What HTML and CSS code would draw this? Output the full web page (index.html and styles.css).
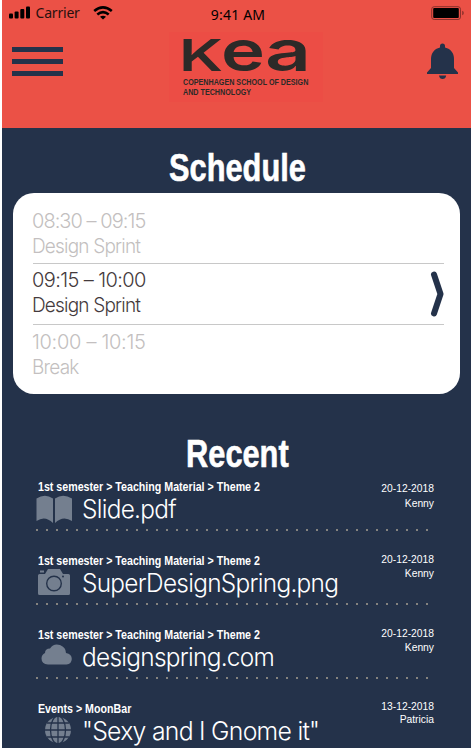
FILE: index.html
```html
<!DOCTYPE html>
<html lang="en">
<head>
<meta charset="utf-8">
<title>KEA</title>
<link rel="stylesheet" href="styles.css">
</head>
<body>
<main class="screen">
  <header class="top">
    <div class="status">
      <div class="status-left">
        <svg class="signal" width="22" height="13" viewBox="0 0 22 13"><rect x="0" y="7.500" width="4" height="5" rx="1"/><rect x="5.600" y="5.500" width="4" height="7" rx="1"/><rect x="11.300" y="3" width="4" height="9.500" rx="1"/><rect x="17" y="0.500" width="4" height="12" rx="1"/></svg>
        <span class="carrier">Carrier</span>
        <svg class="wifi" width="20" height="14" viewBox="0 0 20 14" fill="none" stroke="#000" stroke-width="2.600"><path d="M1.200 5.100Q10 -2.200 18.800 5.100"/><path d="M4.300 8.500Q10 3.900 15.700 8.500"/><path d="M7 10.700Q10 8.600 13 10.700L10 13.600Z" fill="#000" stroke="none"/></svg>
      </div>
      <span class="clock">9:41 AM</span>
      <svg class="battery" width="34" height="14" viewBox="0 0 34 14"><rect x=".7" y=".7" width="28.800" height="12.800" rx="2.500" fill="none" stroke="#8b302b"/><rect x="2.200" y="2" width="25.600" height="10" rx="1" fill="#000"/><path d="M31.200 4.800q1.600.5 1.600 2.200t-1.600 2.200z" fill="#8b302b"/></svg>
    </div>
    <div class="bar">
      <div class="menu"><i></i><i></i><i></i></div>
      <div class="brand">
        <svg class="logo" width="130" height="38" viewBox="0 0 130 38"><text class="logo-k" x="-4" y="36" textLength="44" lengthAdjust="spacingAndGlyphs">K</text><text class="logo-ea" x="38" y="35.500" textLength="44" lengthAdjust="spacingAndGlyphs">e</text><text class="logo-ea" x="82" y="35.500" textLength="46" lengthAdjust="spacingAndGlyphs">a</text></svg>
        <div class="tagline">COPENHAGEN SCHOOL OF DESIGN<br>AND TECHNOLOGY</div>
      </div>
      <svg class="bell" width="32" height="37" viewBox="0 0 32 37"><path d="M13 4.500V3a2.500 2.500 0 0 1 5 0v1.500C24 5.800 27 10.500 27 16v9l4 4.500V31H0v-1.500L4 25v-9C4 10.500 7 5.800 13 4.500ZM12 32.500h7.200q-.6 3.500-3.600 3.500T12 32.500Z" fill="#24324a"/></svg>
    </div>
  </header>

  <h1 class="heading schedule-heading"><span>Schedule</span></h1>
  <section class="card">
    <div class="slot muted"><p class="early">08:30 – 09:15</p><p class="name">Design Sprint</p></div>
    <div class="slot current"><div><p>09:15 – 10:00</p><p class="name">Design Sprint</p></div>
      <svg class="chevron" width="14" height="46" viewBox="0 0 14 46" fill="none" stroke="#24324a" stroke-width="6" stroke-linecap="round" stroke-linejoin="round"><path d="M4 3.500L10.500 23L4 42.500"/></svg></div>
    <div class="slot muted"><p class="late">10:00 – 10:15</p><p class="name">Break</p></div>
  </section>

  <h1 class="heading recent-heading"><span>Recent</span></h1>
  <section class="recent">
    <article class="item first">
      <p class="crumbs">1st semester &gt; Teaching Material &gt; Theme 2</p>
      <div class="file"><svg class="icon" width="42" height="30" viewBox="0 0 42 30"><path d="M.5 3.500Q9-2 17 3.500V28Q9 20 .5 26Z M19 3.500Q27-2 36 3.500V26Q27 20 19 28Z"/></svg><span>Slide.pdf</span></div>
      <p class="meta">20-12-2018<br>Kenny</p>
      <svg class="dots" width="396" height="4"><line x1="0" y1="2" x2="395" y2="2"/></svg>
    </article>
    <article class="item">
      <p class="crumbs">1st semester &gt; Teaching Material &gt; Theme 2</p>
      <div class="file"><svg class="icon" width="42" height="30" viewBox="0 0 42 30"><path d="M4 1.500h4v2H4zM3.500 5H9l3-5h12l3 5h5.500q1.500 0 1.500 1.500v18q0 1.500-1.500 1.500h-29Q2 26 2 24.500v-18Q2 5 3.500 5Z"/><circle cx="18" cy="14.500" r="7.300" fill="none" stroke="#24324a" stroke-width="1.400"/><circle cx="27" cy="7.500" r="1" fill="#24324a"/></svg><span>SuperDesignSpring.png</span></div>
      <p class="meta">20-12-2018<br>Kenny</p>
      <svg class="dots" width="396" height="4"><line x1="0" y1="2" x2="395" y2="2"/></svg>
    </article>
    <article class="item">
      <p class="crumbs">1st semester &gt; Teaching Material &gt; Theme 2</p>
      <div class="file"><svg class="icon" width="42" height="30" viewBox="0 0 42 30"><path d="M12 21.500Q5.500 21 5.500 15.500Q5.500 11.500 9 10Q9 5.500 14 5.500Q17.500 0 24 2Q30 4.500 30 10Q35.800 11 35.800 16Q35.500 21 30.500 21.500Z"/></svg><span>designspring.com</span></div>
      <p class="meta">20-12-2018<br>Kenny</p>
      <svg class="dots" width="396" height="4"><line x1="0" y1="2" x2="395" y2="2"/></svg>
    </article>
    <article class="item last">
      <p class="crumbs">Events &gt; MoonBar</p>
      <div class="file"><svg class="icon" width="42" height="30" viewBox="0 0 42 30"><circle cx="22" cy="13" r="13"/><g fill="none" stroke="#24324a" stroke-width="1.300"><path d="M22 0V26M8 13H36M11 6H33M11 20H33"/><ellipse cx="22" cy="13" rx="7.500" ry="14"/></g></svg><span class="wide">"Sexy and I Gnome it"</span></div>
      <p class="meta">13-12-2018<br>Patricia</p>
    </article>
  </section>
</main>
</body>
</html>
```
FILE: styles.css
```css
* { box-sizing: border-box; }
body { margin: 0; background: #fff; overflow: hidden; }
p, h1 { margin: 0; }
.screen {
  width: 469px;
  height: 748px;
  margin-left: 2px;
  overflow: hidden;
  background: #24324a;
  font-family: Inter, "Liberation Sans", sans-serif;
}
.top { height: 128px; background: #eb5146; }
.status {
  display: grid;
  grid-template-columns: 1fr auto 1fr;
  height: 32px;
  padding: 6px 6px 0 7px;
  font: 14px/16px "Noto Sans", "Open Sans", sans-serif;
}
.status-left { display: flex; align-items: flex-start; }
.carrier { margin: -1px 13px 0 4.500px; letter-spacing: -.2px; color: #28100e; }
.clock { margin: 1px -1px 0 1px; letter-spacing: .2px; }
.battery { justify-self: end; }
.bar { display: flex; justify-content: space-between; align-items: flex-start; padding: 0 13px 0 10px; }
.menu { display: grid; gap: 7px; margin-top: 15px; width: 51px; }
.menu i { height: 5px; background: #24324a; }
.brand { width: 154px; height: 70px; margin-left: 1px; padding: 3px 0 0 14px; background: #ec4d45; color: #2c2a28; }
.logo { display: block; fill: #2c2a28; overflow: visible; }
.logo-k { font: 600 44px Inter; }
.logo-ea { font: 600 57px Inter; }
.tagline {
  width: 155px;
  margin-top: 4px;
  font: bold 8.700px/10px "Liberation Sans", sans-serif;
  white-space: nowrap;
  transform: scaleX(.825);
  transform-origin: 0 0;
}
.bell { margin-top: 11px; margin-right: -1px; }
.heading {
  text-align: center;
  color: #fff;
  font: bold 38px/44px "Liberation Sans", sans-serif;
}
.heading span { display: inline-block; transform: translateX(1px) scaleX(.81); -webkit-text-stroke: .6px #fff; }
.schedule-heading { margin-top: 18px; }
.card {
  width: 447px;
  height: 201px;
  margin: 3px 0 0 11px;
  padding: 16px 16px 0 20px;
  border-radius: 21px;
  background: #fff;
  color: #443a3c;
  font-size: 20px;
  line-height: 25px;
  font-weight: 300;
  letter-spacing: -.6px;
}
.slot { height: 61px; }
.slot p { margin-left: -1px; }
.slot:first-child { height: 54px; }
.current { display: flex; justify-content: space-between; padding-top: 4px; border-top: 1px solid #c8c8c8; border-bottom: 1px solid #c8c8c8; height: 62px; }
.slot:last-child { padding-top: 5px; }
.early { letter-spacing: -.95px; }
.late { letter-spacing: -.3px; }
.name { letter-spacing: -.85px; transform: scaleX(.95); transform-origin: 0 0; }
.chevron { margin-top: 3px; }
.muted { color: #c3bfc0; }
.recent-heading { margin-top: 38px; }
.recent { padding: 2px 0 0 34px; color: #fff; }
.item { display: grid; grid-template-columns: 300px 98px; grid-template-rows: 17px 33px 24px; height: 74px; }
.crumbs { margin-left: 2px; width: 270px; font: bold 12.700px/18px "Liberation Sans", sans-serif; white-space: nowrap; transform: scaleX(.84); transform-origin: 0 0; }
.file { grid-row: 2; display: flex; font-size: 25.500px; line-height: 28px; font-weight: 300; letter-spacing: -.75px; white-space: nowrap; }
.file span { transform: scaleX(.957); transform-origin: 0 0; }
.file .wide { transform: scaleX(.972); }
.icon { flex: none; margin-right: 4px; fill: #747f8f; }
.meta { grid-row: 1 / 3; grid-column: 2; text-align: right; font: 10.300px/13.500px "Liberation Sans", sans-serif; padding-top: 1px; }
.first .meta { padding-top: 4px; line-height: 14.500px; }
.last .meta { padding-top: 0; line-height: 13px; }
.dots { grid-row: 3; grid-column: 1 / 3; stroke: #85837f; stroke-width: 2; stroke-dasharray: 2 8; }
```
